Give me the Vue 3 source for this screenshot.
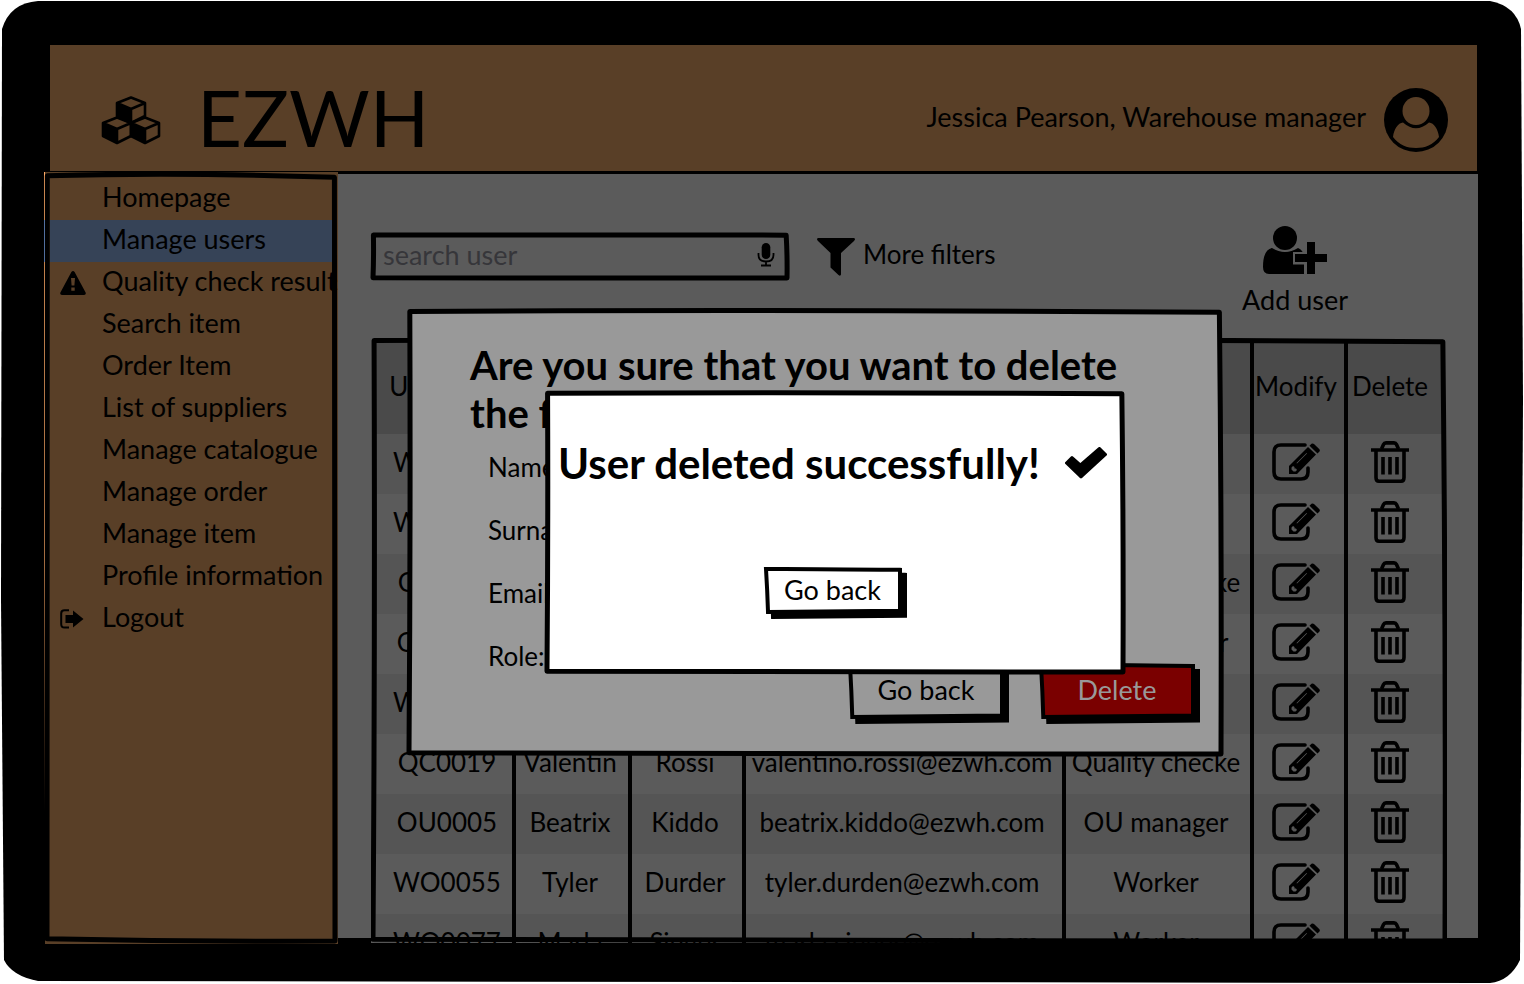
<script setup>
import { h } from 'vue'

const menu = [
  { label: 'Homepage' },
  { label: 'Manage users', active: true },
  { label: 'Quality check results', icon: 'warning' },
  { label: 'Search item' },
  { label: 'Order Item' },
  { label: 'List of suppliers' },
  { label: 'Manage catalogue' },
  { label: 'Manage order' },
  { label: 'Manage item' },
  { label: 'Profile information' },
  { label: 'Logout', icon: 'logout' },
]

const users = [
  { id: 'WO0001' },
  { id: 'WO0002' },
  { id: 'QC0012', role: 'Quality checke' },
  { id: 'OU0001', role: 'OU manager' },
  { id: 'WO0011' },
  { id: 'QC0019', name: 'Valentin', surname: 'Rossi', email: 'valentino.rossi@ezwh.com', role: 'Quality checke' },
  { id: 'OU0005', name: 'Beatrix', surname: 'Kiddo', email: 'beatrix.kiddo@ezwh.com', role: 'OU manager' },
  { id: 'WO0055', name: 'Tyler', surname: 'Durder', email: 'tyler.durden@ezwh.com', role: 'Worker' },
  { id: 'WO0077', name: 'Marla', surname: 'Singer', email: 'marla.singer@ezwh.com', role: 'Worker' },
]

const fields = ['Name:', 'Surname:', 'Email:', 'Role:']

// Hand-drawn outline stretched over its parent box.
const Sketch = (props) =>
  h(
    'svg',
    { viewBox: '0 0 100 100', preserveAspectRatio: 'none', 'aria-hidden': 'true' },
    [
      h('path', {
        d: props.tilt
          ? 'M0 0 Q20 -1 100 2 L100 97 Q55 98 1.500 100 Q1 50 0 0Z'
          : 'M.1 .1 Q45 -.4 99.8 .3 Q100.1 50 100 100 Q50 100.1 0 99.7 Q.2 50 .1 .1Z',
        stroke: '#000',
        'stroke-width': props.tilt ? 4 : 5,
        'stroke-linejoin': props.tilt ? 'miter' : 'round',
        'vector-effect': 'non-scaling-stroke',
      }),
    ],
  )
Sketch.props = { tilt: Boolean }
</script>

<template>
  <div class="device">
    <svg class="casing" viewBox="0 0 1524 984" preserveAspectRatio="none" aria-hidden="true">
      <path d="M2 29 Q10 3 38 1 H1490 Q1516 6 1521 29 L1523 400 L1520 960 Q1510 981 1490 983 L38 981 Q12 976 4 960 L1 600Z" />
    </svg>

    <header class="topbar">
      <svg class="cubes" viewBox="0 0 60 50" aria-hidden="true">
        <g v-for="p in ['30 1', '16 21', '44 21']" :key="p" :transform="`translate(${p})`">
          <path d="M0 1.5 L14 7 V20 L0 27 L-14 20 V7Z M-14 7 L0 13 L14 7 M0 13 V27" fill="none" stroke="#000" stroke-width="2.6" stroke-linejoin="round" />
          <path d="M-14 7 L0 13 V27 L-14 20Z" />
        </g>
      </svg>
      <h1>EZWH</h1>
      <span class="who">Jessica Pearson, Warehouse manager</span>
      <svg class="avatar" viewBox="0 0 64 64" aria-hidden="true">
        <circle cx="32" cy="32" r="32" />
        <ellipse cx="32" cy="23" rx="13.5" ry="14" fill="#593f27" />
        <path d="M9 49 C10 41 14 35 19 34.5 Q32 46 45 34.5 C50 35 54 41 55 49 C49 57 41 60 32 60 C23 60 15 57 9 49Z" fill="#593f27" />
      </svg>
    </header>

    <div class="body">
      <nav class="sidebar" aria-label="Main menu">
        <Sketch class="sketch" />
        <a v-for="m in menu" :key="m.label" href="#" :class="{ active: m.active }">
          <span class="mark">
            <svg v-if="m.icon === 'warning'" width="26" height="24" viewBox="0 0 26 24" aria-hidden="true">
              <path fill-rule="evenodd" d="M11.4 1 Q13 -1 14.6 1 L25.6 21.5 Q26.4 24 24 24 H2 Q-.4 24 .4 21.5Z M11 7 L11.6 14.5 H14.4 L15 7Z M11.3 16.5 V19.8 H14.7 V16.5Z" />
            </svg>
            <svg v-if="m.icon === 'logout'" width="24" height="20" viewBox="0 0 24 20" aria-hidden="true">
              <path d="M9 1.2 H4.5 Q1.2 1.2 1.2 4.5 V15 Q1.2 18.6 4.5 18.6 H9" fill="none" stroke="#000" stroke-width="2" />
              <path d="M5.5 6 H13 V1.5 L23.5 10 L13 18.5 V14 H5.5Z" />
            </svg>
          </span>
          {{ m.label }}
        </a>
      </nav>

      <main class="content">
        <div class="toolbar">
          <div class="search">
            <Sketch class="sketch" />
            <input type="text" placeholder="search user" aria-label="search user" />
            <svg width="18" height="24" viewBox="0 0 18 24" aria-hidden="true">
              <rect x="4.7" y="0" width="8.6" height="16" rx="4.3" />
              <path d="M1.5 10 V12 Q1.5 18.5 9 18.5 Q16.5 18.5 16.5 12 V10 M9 18.5 V22 M4 22.5 H14" fill="none" stroke="#000" stroke-width="1.8" />
            </svg>
          </div>
          <button class="filters" type="button">
            <svg width="38" height="38" viewBox="0 0 38 38" aria-hidden="true">
              <path d="M1 0 H37 Q39 1 37 3 L24 15 V36.5 Q23.5 38.5 21.5 37 L13.5 29.5 V15 L1 3 Q-1 1 1 0Z" />
            </svg>
            More filters
          </button>
          <button class="add" type="button">
            <svg width="64" height="48" viewBox="0 0 64 48" aria-hidden="true">
              <path d="M9 22 Q22 30 35 22 Q40 24 41 30 V48 H6 Q0 48 0 41 Q0 24 9 22Z" />
              <circle cx="22" cy="12" r="13.5" fill="#5b5b5b" />
              <circle cx="22" cy="12" r="12" />
              <path d="M30 26 H42 V14 H54 V48 H41 V38.5 H30Z" fill="#5b5b5b" />
              <path d="M32 28 H44 V16 H52 V28 H64 V36 H52 V48 H44 V36 H32Z" />
            </svg>
            Add user
          </button>
        </div>

        <div class="tablebox">
          <table>
            <colgroup>
              <col class="c-id" /><col class="c-name" /><col class="c-sur" /><col /><col class="c-role" /><col class="c-mod" /><col class="c-del" />
            </colgroup>
            <thead>
              <tr>
                <th>Username</th><th></th><th></th><th></th><th></th><th>Modify</th><th>Delete</th>
              </tr>
            </thead>
            <tbody>
              <tr v-for="u in users" :key="u.id">
                <td>{{ u.id }}</td>
                <td>{{ u.name }}</td>
                <td>{{ u.surname }}</td>
                <td>{{ u.email }}</td>
                <td>{{ u.role }}</td>
                <td>
                  <button class="icon" type="button" aria-label="Modify">
                    <svg width="48" height="38" viewBox="0 0 48 38" aria-hidden="true">
                      <path d="M33 2 H9 Q2 2 2 9 V29 Q2 36 9 36 H29 Q36 36 36 29 V25" fill="none" stroke="#000" stroke-width="3.6" stroke-linecap="round" />
                      <path fill-rule="evenodd" d="M17 31 V23 L36 4 L44 11.5 L25 31Z M19.5 24.5 V26.5 L21.5 28.5 H23.5 L25 27 L24 25.5 H22.5 V24 L21 23Z M25 20.5 L35 10.5 L34.5 10 L24.5 20Z" />
                      <path d="M37.5 2.8 L39.5 .8 Q40.8 0 42 1 L47.2 6 Q48.4 7.2 47.4 8.6 L45.5 10.5Z" />
                    </svg>
                  </button>
                </td>
                <td>
                  <button class="icon" type="button" aria-label="Delete">
                    <svg width="38" height="42" viewBox="0 0 38 42" aria-hidden="true">
                      <g fill="none" stroke="#000" stroke-width="3.6">
                        <path d="M0 9 H38" />
                        <path d="M10.5 8 L12.5 3.5 Q13.2 1.9 15 1.9 H23 Q24.8 1.9 25.5 3.5 L27.5 8" />
                        <path d="M5 9 V36.5 Q5 40.2 8 40.2 H30 Q33 40.2 33 36.5 V9" />
                        <path d="M12 16 V33.5 M19 16 V33.5 M26 16 V33.5" />
                      </g>
                    </svg>
                  </button>
                </td>
              </tr>
            </tbody>
          </table>
          <Sketch class="sketch" />
        </div>
      </main>
    </div>

    <section class="confirm" role="dialog" aria-labelledby="confirm-title">
      <Sketch class="sketch" />
      <h2 id="confirm-title">Are you sure that you want to delete the following user?</h2>
      <ul>
        <li v-for="f in fields" :key="f">{{ f }}</li>
      </ul>
      <div class="actions">
        <button class="btn back" type="button"><Sketch class="sketch" tilt />Go back</button>
        <button class="btn danger" type="button"><Sketch class="sketch" tilt />Delete</button>
      </div>
    </section>

    <section class="success" role="dialog" aria-labelledby="success-title">
      <Sketch class="sketch" />
      <div class="message">
        <h2 id="success-title">User deleted successfully!</h2>
        <svg width="42" height="32" viewBox="0 0 42 32" aria-hidden="true">
          <path d="M1.5 16 L7 10.5 L15.5 18 L34.5 1.5 L40.5 7.5 L16 30Z" stroke="#000" stroke-width="3" stroke-linejoin="round" />
        </svg>
      </div>
      <button class="btn" type="button"><Sketch class="sketch" tilt />Go back</button>
    </section>
  </div>
</template>

<style>
body {
  background: #fff;
}
</style>

<style scoped>
* {
  box-sizing: border-box;
}
.device {
  position: relative;
  display: flex;
  flex-direction: column;
  height: 100vh;
  min-height: 800px;
  padding: 45px 46px 40px 44px;
  overflow: hidden;
  font-family: Lato, "Liberation Sans", sans-serif;
  font-size: 26px;
  line-height: 32px;
  color: #000;
}
button {
  padding: 0;
  border: 0;
  background: none;
  font: inherit;
  color: inherit;
}
h1,
h2,
ul {
  margin: 0;
  padding: 0;
}
.casing {
  position: absolute;
  inset: 0;
  width: 100%;
  height: 100%;
}
.sketch {
  position: absolute;
  inset: 2px;
  width: calc(100% - 4px);
  height: calc(100% - 4px);
  overflow: visible;
  pointer-events: none;
  --fill: none;
}
.sketch :deep(path) {
  fill: var(--fill);
}
.topbar {
  position: relative;
  display: flex;
  align-items: center;
  flex: none;
  height: 126px;
  margin: 0 1px 0 6px;
  padding: 24px 29px 0 51px;
  background: #593f27;
}
.cubes {
  width: 60px;
  height: 50px;
}
h1 {
  margin-left: 36px;
  padding-bottom: 6px;
  font-size: 78px;
  line-height: 96px;
  font-weight: 400;
}
.who {
  margin-left: auto;
  padding-bottom: 6px;
  font-size: 27px;
}
.avatar {
  width: 64px;
  height: 64px;
  margin-left: 18px;
}
.body {
  position: relative;
  display: flex;
  flex: 1;
  min-height: 0;
}
.sidebar {
  position: relative;
  flex: none;
  width: 294px;
  margin-top: 1px;
  padding: 6px 6px 0;
  background: #593f27;
  overflow: hidden;
  font-size: 27px;
}
.sidebar::before {
  content: "";
  position: absolute;
  inset: 0 auto 0 0;
  width: 1px;
  background: linear-gradient(#fa6 48px, #6c92cf 48px, #6c92cf 90px, #fa6 90px, #fa6 50%, #000 83%);
}
.sidebar .sketch {
  inset: 3px;
  width: calc(100% - 6px);
  height: calc(100% - 6px);
}
.sidebar a {
  position: relative;
  display: flex;
  align-items: center;
  height: 42px;
  padding-bottom: 5px;
  color: #000;
  text-decoration: none;
  white-space: nowrap;
}
.sidebar a.active {
  background: #364357;
}
.mark {
  display: flex;
  flex: none;
  width: 52px;
  padding: 5px 0 0 10px;
}
.content {
  display: flex;
  flex-direction: column;
  flex: 1;
  min-width: 0;
  margin: 3px 0 6px;
  padding: 52px 31px 0 33px;
  background: #5b5b5b;
}
.toolbar {
  display: flex;
  align-items: flex-start;
  flex: none;
  height: 112px;
}
.search {
  position: relative;
  display: flex;
  align-items: center;
  width: 418px;
  height: 47px;
  margin-top: 7px;
  padding: 0 14px 4px 12px;
}
.search input {
  flex: 1;
  min-width: 0;
  padding: 0;
  border: 0;
  background: none;
  font: inherit;
  font-size: 27px;
  outline: 0;
}
.search input::placeholder {
  color: #36363a;
  opacity: 1;
}
.filters {
  display: flex;
  align-items: flex-start;
  gap: 8px;
  margin: 12px 0 0 28px;
}
.filters,
.add {
  white-space: nowrap;
}
.add {
  display: flex;
  flex-direction: column;
  align-items: center;
  gap: 10px;
  margin: 0 99px 0 auto;
  font-size: 27px;
}
.tablebox {
  position: relative;
  flex: 1;
  min-height: 0;
  margin-bottom: -5px;
  padding: 3px 3px 0;
  overflow: hidden;
  background: #5b5b5b;
}
table {
  width: 100%;
  table-layout: fixed;
  border-spacing: 0;
  text-align: center;
  white-space: nowrap;
}
.c-id {
  width: 138px;
}
.c-name {
  width: 116px;
}
.c-sur {
  width: 114px;
}
.c-role {
  width: 188px;
}
.c-mod {
  width: 94px;
}
.c-del {
  width: 100px;
}
th,
td {
  height: 60px;
  padding: 0 4px 4px 0;
  font-weight: 400;
}
th {
  height: 93px;
  background: #4a4a4a;
}
td:first-child,
th:first-child {
  padding: 0 0 4px 8px;
}
td:nth-child(n + 2),
th:nth-child(n + 2) {
  border-left: 4px solid #000;
}
td:nth-child(6),
th:nth-child(6) {
  padding-right: 6px;
}
td:last-child,
th:last-child {
  padding-right: 12px;
}
tbody tr:nth-child(odd) {
  background: #555;
}
.icon,
.icon svg {
  display: block;
  margin: 0 auto;
}
.confirm,
.success {
  position: absolute;
  isolation: isolate;
  display: flex;
  flex-direction: column;
}
.confirm > .sketch,
.success > .sketch {
  z-index: -1;
  --fill: #999;
}
.success > .sketch {
  --fill: #fff;
}
.confirm {
  top: 309px;
  left: calc(50% - 355px);
  width: 816px;
  height: 447px;
  padding: 32px 28px 0 63px;
}
.success {
  top: 391px;
  left: calc(50% - 217px);
  width: 580px;
  height: 283px;
  padding: 48px 18px 0 13px;
  align-items: center;
}
h2 {
  font-size: 42px;
  line-height: 48px;
  font-weight: 700;
}
.confirm h2 {
  padding-right: 48px;
  font-size: 40px;
}
ul {
  margin: 14px 0 0 18px;
  list-style: none;
}
li {
  height: 63px;
  line-height: 32px;
}
li:last-child {
  height: 32px;
}
.actions {
  display: flex;
  justify-content: flex-end;
  gap: 35px;
  margin-top: -9px;
}
.btn {
  position: relative;
  isolation: isolate;
  width: 138px;
  height: 47px;
  padding-bottom: 2px;
  font-size: 27px;
}
.btn .sketch {
  z-index: -1;
  --fill: #fff;
  filter: drop-shadow(5px 5px 0 #000);
}
.actions .btn {
  width: 156px;
  height: 56px;
}
.actions .sketch {
  --fill: #999;
}
.actions .danger {
  color: #999;
}
.actions .danger .sketch {
  --fill: #7a0000;
}
.message {
  display: flex;
  align-items: center;
  justify-content: space-between;
  width: 100%;
  margin-bottom: 80px;
  white-space: nowrap;
}
</style>
